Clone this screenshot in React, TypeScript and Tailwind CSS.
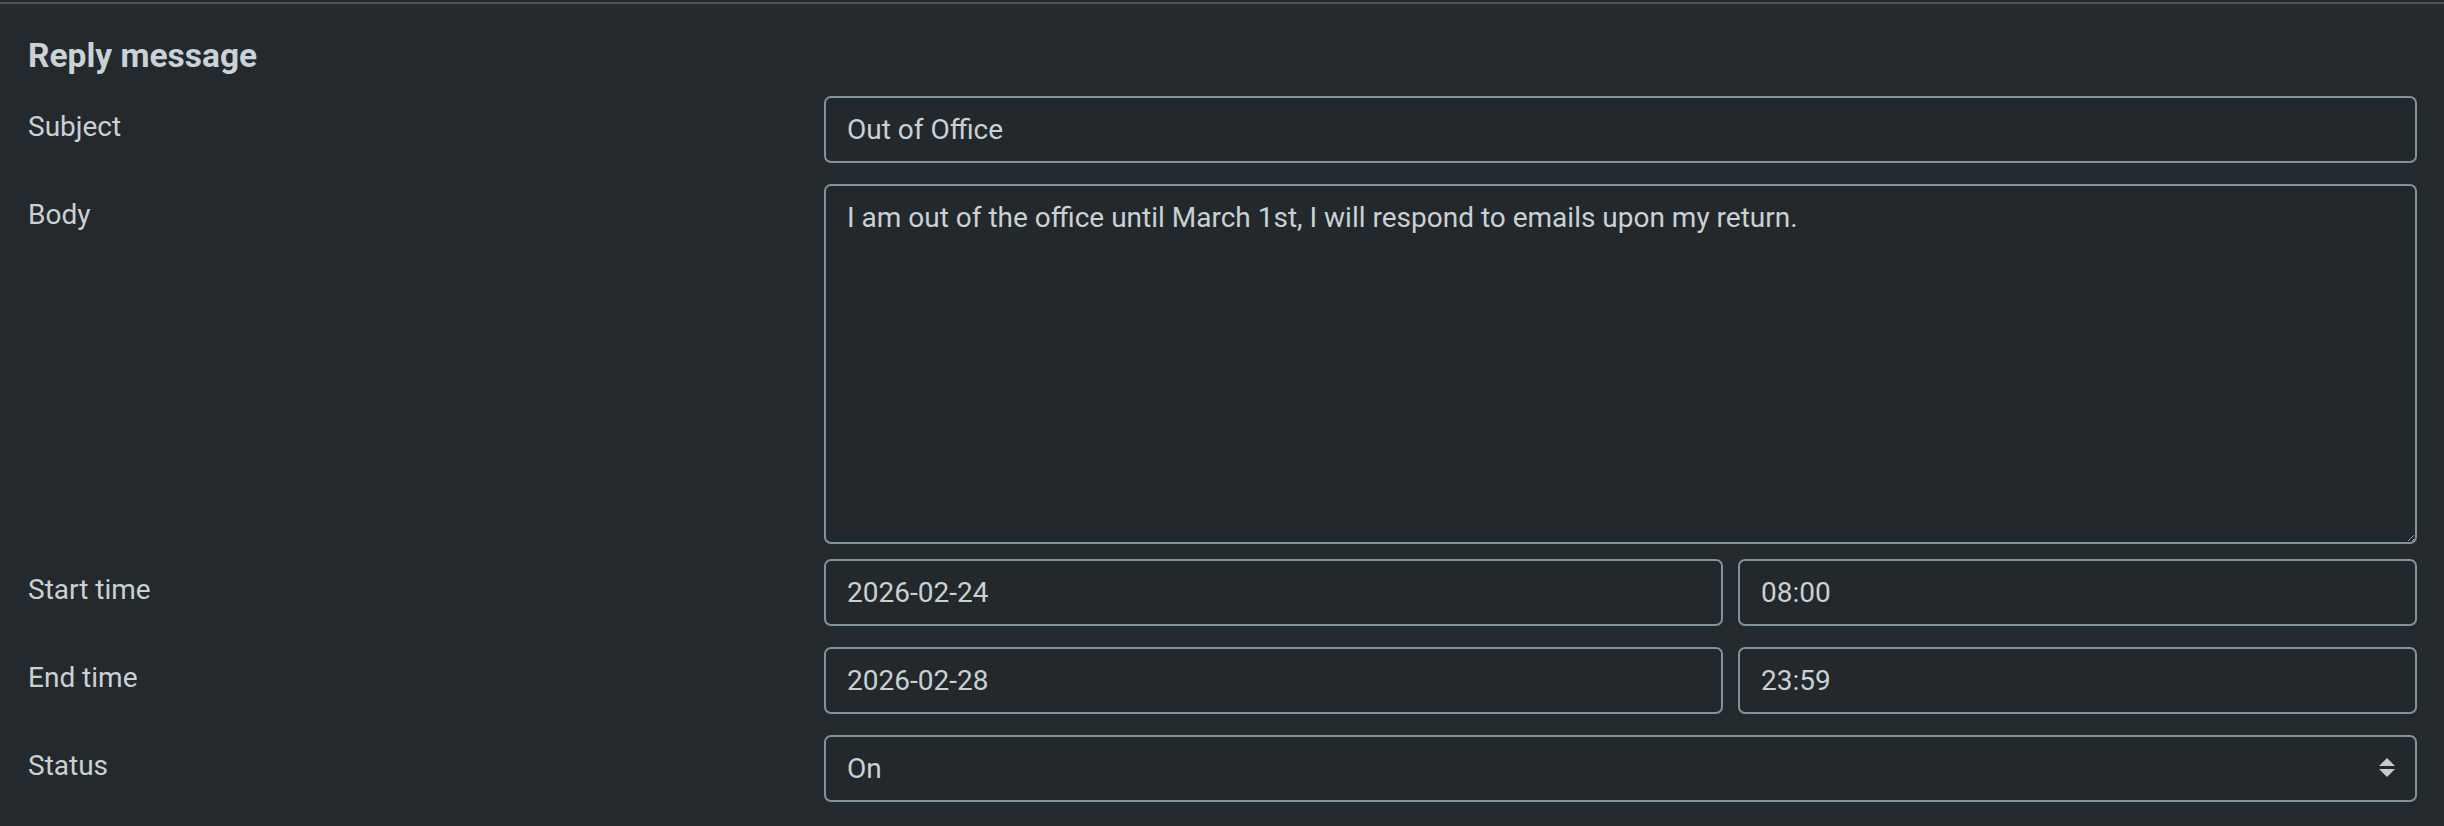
import React from 'react';

const fieldClass =
  'w-full h-[67px] rounded-[7px] border-2 border-[#82949b] bg-[#23282c] px-[21px] py-[10.5px] text-[28px] leading-[42px] text-[#c9d1d5] outline-none';

function Row({ label, className = '', children }: { label: string; className?: string; children: React.ReactNode }) {
  return (
    <div className={`flex ${className}`}>
      <div className="w-[796px] shrink-0 pt-[9.5px] text-[28px] leading-[42px] text-[#c9d1d5]">{label}</div>
      <div className="flex-1">{children}</div>
    </div>
  );
}

export default function App() {
  return (
    <div className="min-h-[826px] bg-[#24292d] pt-[2px] font-['Roboto','Liberation_Sans',sans-serif]">
      <div className="border-t-2 border-[#4b5459]" />
      <div className="pl-[28px] pr-[27px]">
        <h2 className="mt-[31px] text-[33.5px] font-bold leading-[42px] text-[#c9d2d6]">Reply message</h2>

        <Row label="Subject" className="mt-[19px]">
          <input readOnly className={fieldClass} value="Out of Office" />
        </Row>

        <Row label="Body" className="mt-[21px]">
          <textarea
            readOnly
            className="block w-full h-[360px] rounded-[7px] border-2 border-[#82949b] bg-[#23282c] px-[21px] py-[10.5px] text-[28px] leading-[42px] text-[#c9d1d5] outline-none [color-scheme:dark]"
            value="I am out of the office until March 1st, I will respond to emails upon my return."
          />
        </Row>

        <Row label="Start time" className="mt-[15px]">
          <div className="grid grid-cols-[899px_1fr] gap-[15px]">
            <input readOnly className={fieldClass} value="2026-02-24" />
            <input readOnly className={fieldClass} value="08:00" />
          </div>
        </Row>

        <Row label="End time" className="mt-[21px]">
          <div className="grid grid-cols-[899px_1fr] gap-[15px]">
            <input readOnly className={fieldClass} value="2026-02-28" />
            <input readOnly className={fieldClass} value="23:59" />
          </div>
        </Row>

        <Row label="Status" className="mt-[21px]">
          <div className="relative">
            <select className={`${fieldClass} appearance-none`} defaultValue="on">
              <option value="on">On</option>
              <option value="off">Off</option>
            </select>
            <svg
              className="pointer-events-none absolute right-[22px] top-[23px]"
              width="16"
              height="20"
              viewBox="0 0 16 20"
              fill="#c3cbcf"
            >
              <path d="M8 0 L16 8 H0 Z" />
              <path d="M0 11 H16 L8 19 Z" />
            </svg>
          </div>
        </Row>
      </div>
    </div>
  );
}
